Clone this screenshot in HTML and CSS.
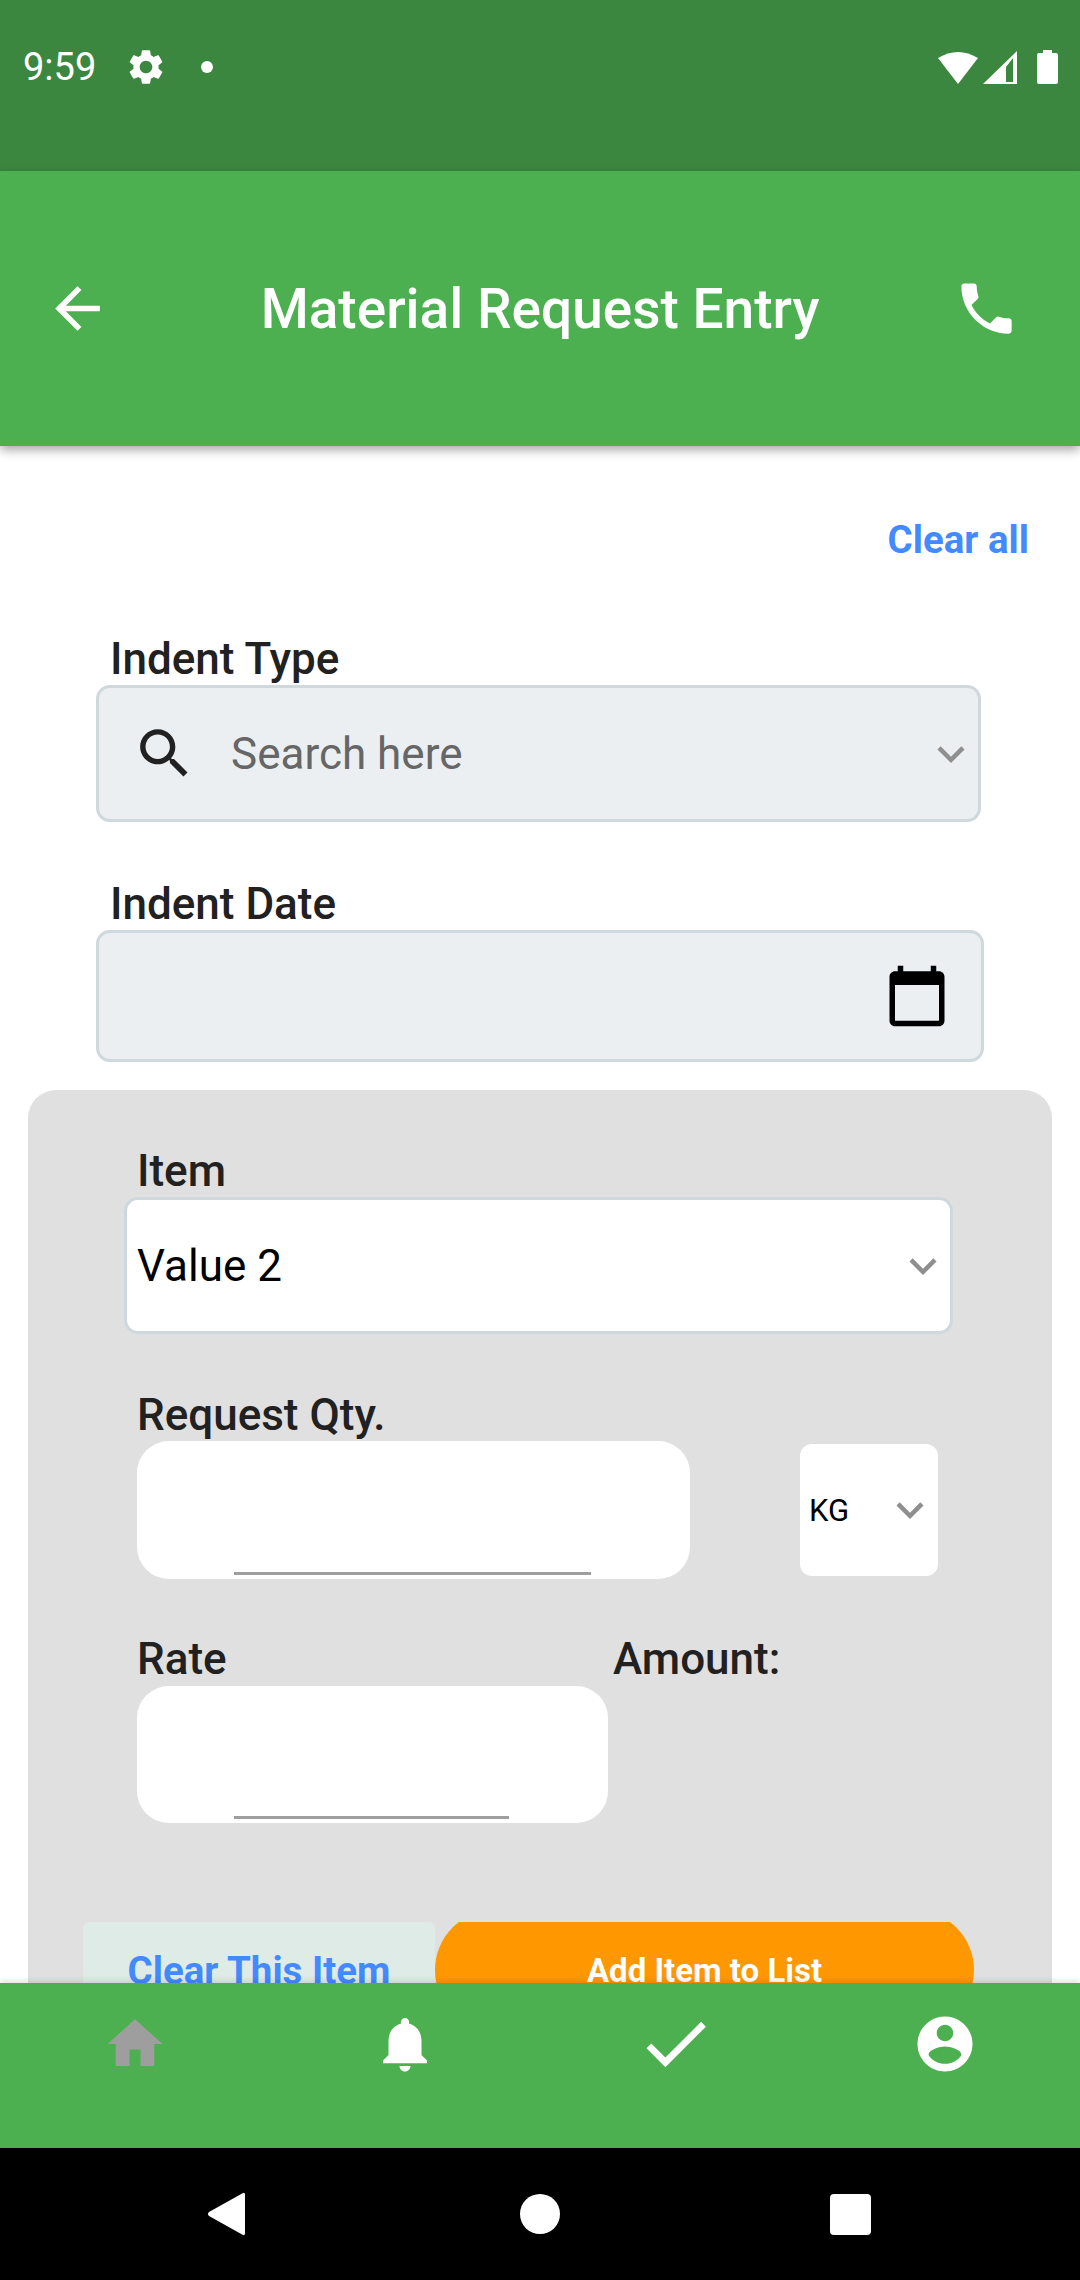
FILE: index.html
```html
<!DOCTYPE html>
<html lang="en">
	<head>
		<meta charset="utf-8">
		<meta name="viewport" content="width=device-width, initial-scale=1.0">
		<title>Material Request Entry</title>
		<link rel="stylesheet" href="styles.css">
	</head>

	<body>
		<div class="statusbar">
			<span class="clock">9:59</span>
			<svg class="gear" viewBox="0 0 24 24"><path d="M19.14 12.94c.04-.3.06-.61.06-.94 0-.32-.02-.64-.07-.94l2.03-1.58c.18-.14.23-.41.12-.61l-1.92-3.32c-.12-.22-.37-.29-.59-.22l-2.39.96c-.5-.38-1.03-.7-1.62-.94l-.36-2.54c-.04-.24-.24-.41-.48-.41h-3.84c-.24 0-.43.17-.47.41l-.36 2.54c-.59.24-1.13.57-1.62.94l-2.39-.96c-.22-.08-.47 0-.59.22L2.74 8.87c-.12.21-.08.47.12.61l2.03 1.58c-.05.3-.09.63-.09.94s.02.64.07.94l-2.03 1.58c-.18.14-.23.41-.12.61l1.92 3.32c.12.22.37.29.59.22l2.39-.96c.5.38 1.03.7 1.62.94l.36 2.54c.05.24.24.41.48.41h3.84c.24 0 .44-.17.47-.41l.36-2.54c.59-.24 1.13-.56 1.62-.94l2.39.96c.22.08.47 0 .59-.22l1.92-3.32c.12-.22.07-.47-.12-.61l-2.01-1.58zM12 15.6c-1.98 0-3.6-1.62-3.6-3.6s1.62-3.6 3.6-3.6 3.6 1.62 3.6 3.6-1.62 3.6-3.6 3.6z"/></svg>
			<span class="dot"></span>
			<svg class="sys-icons" viewBox="0 0 122 36"><path d="M1 9Q21-3 41 9L21 35z"/><path fill-rule="evenodd" d="M46 35 80 2V35zM69 33H76V9L69 18z"/><path d="M106 1H115V4H119Q121 4 121 6V33Q121 35 119 35H102Q100 35 100 33V6Q100 4 102 4H106z"/></svg>
		</div>

		<header class="appbar">
			<svg class="appbar-icon" viewBox="0 0 24 24"><path d="M20 11H7.83l5.59-5.59L12 4l-8 8 8 8 1.41-1.41L7.83 13H20v-2z"/></svg>
			<h1>Material Request Entry</h1>
			<svg class="appbar-icon" viewBox="0 0 24 24"><path d="M6.62 10.79c1.44 2.83 3.76 5.14 6.59 6.59l2.2-2.2c.27-.27.67-.36 1.02-.24 1.12.37 2.33.57 3.57.57.55 0 1 .45 1 1V20c0 .55-.45 1-1 1-9.39 0-17-7.61-17-17 0-.55.45-1 1-1h3.5c.55 0 1 .45 1 1 0 1.25.2 2.45.57 3.57.11.35.03.74-.25 1.02l-2.2 2.2z"/></svg>
		</header>

		<main>
			<div class="clear-all">Clear all</div>

			<section class="top-form">
				<label>Indent Type</label>
				<div class="field field-type">
					<svg class="search" viewBox="0 0 24 24"><path d="M15.5 14h-.79l-.28-.27C15.41 12.59 16 11.11 16 9.5 16 5.91 13.09 3 9.5 3S3 5.91 3 9.5 5.91 16 9.5 16c1.61 0 3.09-.59 4.23-1.57l.27.28v.79l5 4.99L20.49 19l-4.99-5zm-6 0C7.01 14 5 11.99 5 9.5S7.01 5 9.5 5 14 7.01 14 9.5 11.99 14 9.5 14z"/></svg>
					<span class="placeholder">Search here</span>
					<svg class="chev" viewBox="0 0 24 24"><path d="M16.59 8.59L12 13.17 7.41 8.59 6 10l6 6 6-6z"/></svg>
				</div>
				<label class="date-label">Indent Date</label>
				<div class="field field-date">
					<svg class="calendar" viewBox="0 0 24 24"><path d="M20 3h-1V1h-2v2H7V1H5v2H4c-1.1 0-2 .9-2 2v16c0 1.1.9 2 2 2h16c1.1 0 2-.9 2-2V5c0-1.1-.9-2-2-2zm0 18H4V8h16v13z"/></svg>
				</div>
			</section>

			<section class="panel">
				<label>Item</label>
				<div class="field field-item">
					<span class="value">Value 2</span>
					<svg class="chev" viewBox="0 0 24 24"><path d="M16.59 8.59L12 13.17 7.41 8.59 6 10l6 6 6-6z"/></svg>
				</div>

				<label class="qty-label">Request Qty.</label>
				<div class="qty-row">
					<div class="input-box qty-box"><input type="text"></div>
					<div class="unit">
						<span>KG</span>
						<svg class="chev" viewBox="0 0 24 24"><path d="M16.59 8.59L12 13.17 7.41 8.59 6 10l6 6 6-6z"/></svg>
					</div>
				</div>

				<div class="rate-row">
					<div class="rate-col">
						<label>Rate</label>
						<div class="input-box rate-box"><input type="text"></div>
					</div>
					<label class="amount">Amount:</label>
				</div>

				<div class="buttons">
					<button class="btn-clear">Clear This Item</button>
					<div class="add-clip"><button class="btn-add">Add Item to List</button></div>
				</div>
			</section>
		</main>

		<nav class="tabs">
			<svg class="home" viewBox="0 0 24 24"><path d="M10 20v-6h4v6h5v-8h3L12 3 2 12h3v8z"/></svg>
			<svg viewBox="0 0 24 24"><path d="M12 22c1.1 0 2-.9 2-2h-4c0 1.1.89 2 2 2zm6-6v-5c0-3.07-1.64-5.64-4.5-6.32V4c0-.83-.67-1.5-1.5-1.5s-1.5.67-1.5 1.5v.68C7.63 5.36 6 7.92 6 11v5l-2 2v1h16v-1l-2-2z"/></svg>
			<svg class="check" viewBox="0 0 24 24"><path d="M9 16.17L4.83 12l-1.42 1.41L9 19 21 7l-1.41-1.41z"/></svg>
			<svg viewBox="0 0 24 24"><path d="M12 2C6.48 2 2 6.48 2 12s4.48 10 10 10 10-4.48 10-10S17.52 2 12 2zm0 3c1.66 0 3 1.34 3 3s-1.34 3-3 3-3-1.34-3-3 1.34-3 3-3zm0 14.2c-2.5 0-4.71-1.28-6-3.22.03-1.99 4-3.08 6-3.08 1.99 0 5.97 1.09 6 3.08-1.29 1.94-3.5 3.22-6 3.22z"/></svg>
		</nav>

		<div class="sysnav">
			<svg class="sys-back" viewBox="0 0 38 44"><path d="M36 1Q38 0 38 3V41Q38 44 36 43L2 24Q0 22 2 20z"/></svg>
			<span class="sys-home"></span>
			<span class="sys-recent"></span>
		</div>
	</body>
</html>
```

FILE: styles.css
```css
*{
	box-sizing: border-box;
}
body{
	margin: 0;
	width: 1080px;
	height: 2280px;
	display: flex;
	flex-direction: column;
	overflow: hidden;
	background-color: white;
	font-family: Roboto, sans-serif;
	color: #212121;
}
svg{
	display: block;
	fill: currentColor;
	flex: none;
}

/* status bar */
.statusbar{
	height: 171px;
	flex: none;
	background-color: #3b873f;
	color: white;
	display: flex;
	align-items: flex-start;
	padding: 46px 21px 0 23px;
}
.clock{
	font-size: 38px;
	line-height: 42px;
	width: 72px;
}
.gear{
	width: 42px;
	height: 42px;
	margin: 0 0 0 30px;
}
.dot{
	width: 12px;
	height: 12px;
	border-radius: 50%;
	background-color: white;
	margin: 15px 0 0 34px;
}
.sys-icons{
	width: 122px;
	height: 36px;
	margin: 3px 0 0 auto;
}

/* app bar */
.appbar{
	height: 275px;
	flex: none;
	background-color: #4caf50;
	color: white;
	display: flex;
	align-items: center;
	padding: 0 60px 0 44px;
	box-shadow: 0 4px 10px rgba(0,0,0,.35);
	position: relative;
	z-index: 1;
}
.appbar-icon{
	width: 67px;
	height: 67px;
}
.appbar h1{
	flex: 1;
	margin: 0;
	padding-left: 16px;
	text-align: center;
	font-size: 55px;
	line-height: 64px;
	font-weight: 500;
}

/* page */
main{
	flex: 1;
	min-height: 0;
	overflow: hidden;
}
.clear-all{
	margin: 73px 51px 77px 0;
	text-align: right;
	font-size: 38.5px;
	line-height: 42px;
	font-weight: 700;
	color: #448aff;
}
label{
	display: block;
	font-size: 44px;
	line-height: 42px;
	font-weight: 500;
}
.top-form{
	padding-left: 96px;
}
.top-form label{
	padding-left: 14px;
	margin-bottom: 5px;
}
.top-form .date-label{
	margin-top: 61px;
}
.field{
	display: flex;
	align-items: center;
	border: 3px solid #cfd8dc;
	border-radius: 14px;
	background-color: #eceff1;
}
.field-type{
	width: 885px;
	height: 137px;
	padding: 0 0 0 33px;
}
.field-date{
	width: 888px;
	height: 132px;
	padding-right: 31px;
	justify-content: flex-end;
}
.search{
	width: 65px;
	height: 65px;
	color: #212121;
}
.placeholder{
	flex: 1;
	margin-left: 34px;
	font-size: 44px;
	color: #666;
}
.chev{
	width: 54px;
	height: 54px;
	color: #8f8f8f;
}
.calendar{
	width: 66px;
	height: 66px;
	color: black;
}

/* grey item panel */
.panel{
	margin: 28px 28px 0;
	padding: 60px 0 0 109px;
	border-radius: 28px;
	background-color: #e0e0e0;
	height: 1000px;
}
.panel > label:first-child{
	margin-bottom: 5px;
}
.field-item{
	width: 829px;
	height: 137px;
	margin: 0 0 0 -13px;
	padding: 0 0 0 10px;
	background-color: white;
	justify-content: space-between;
}
.value{
	font-size: 44px;
	color: black;
}
.qty-label{
	margin: 60px 0 5px;
}
.qty-row{
	display: flex;
	align-items: center;
}
.input-box{
	height: 138px;
	display: flex;
	align-items: flex-end;
	justify-content: center;
	padding: 0 3px 4px 0;
	border-radius: 32px;
	background-color: white;
}
.input-box input{
	display: block;
	height: 40px;
	padding: 0;
	border: 0;
	border-bottom: 3px solid #9e9e9e;
	border-radius: 0;
	background: none;
	outline: 0;
}
.qty-box{
	width: 553px;
}
.qty-box input{
	width: 357px;
}
.unit{
	width: 138px;
	height: 132px;
	margin-left: 110px;
	padding: 0 1px 0 9px;
	display: flex;
	align-items: center;
	justify-content: space-between;
	border-radius: 12px;
	background-color: white;
	font-size: 31px;
	color: black;
}
.rate-row{
	display: flex;
	margin-top: 59px;
}
.rate-col label{
	margin-bottom: 6px;
}
.rate-box{
	width: 471px;
	height: 137px;
}
.rate-box input{
	width: 275px;
}
.amount{
	margin-left: 5px;
}
.buttons{
	display: flex;
	margin: 99px 0 0 -54px;
}
.buttons button{
	padding: 0;
	border: 0;
	font-family: Roboto, sans-serif;
	font-weight: 700;
}
.btn-clear{
	width: 352px;
	height: 96px;
	padding-top: 4px;
	border-radius: 6px;
	background-color: #dfebe6;
	color: #448aff;
	font-size: 38.5px;
}
/* the orange button is taller than its slot, the top of the curve is cut */
.add-clip{
	width: 539px;
	height: 96px;
	overflow: hidden;
}
.btn-add{
	display: block;
	width: 539px;
	height: 120px;
	margin-top: -12px;
	padding-top: 2px;
	border-radius: 60px;
	background-color: #ff9800;
	color: white;
	font-size: 33px;
}

/* bottom tabs */
.tabs{
	height: 165px;
	flex: none;
	display: grid;
	grid-template-columns: repeat(4, 1fr);
	padding-top: 28px;
	justify-items: center;
	align-items: start;
	background-color: #4caf50;
	color: white;
	box-shadow: 0 -2px 6px rgba(0,0,0,.12);
	position: relative;
}
.tabs svg{
	width: 66px;
	height: 66px;
}
.tabs .home{
	color: #9e9e9e;
}
.tabs .check{
	width: 81px;
	height: 81px;
	margin-top: -8px;
}

/* android nav */
.sysnav{
	height: 132px;
	flex: none;
	background-color: black;
	display: grid;
	grid-template-columns: 1fr 40px 1fr;
	align-items: center;
	padding: 0 207px;
}
.sys-back{
	width: 38px;
	height: 44px;
	fill: white;
}
.sys-home{
	width: 40px;
	height: 40px;
	border-radius: 50%;
	background-color: white;
}
.sys-recent{
	width: 41px;
	height: 41px;
	margin-right: 2px;
	justify-self: end;
	border-radius: 4px;
	background-color: white;
}
```
